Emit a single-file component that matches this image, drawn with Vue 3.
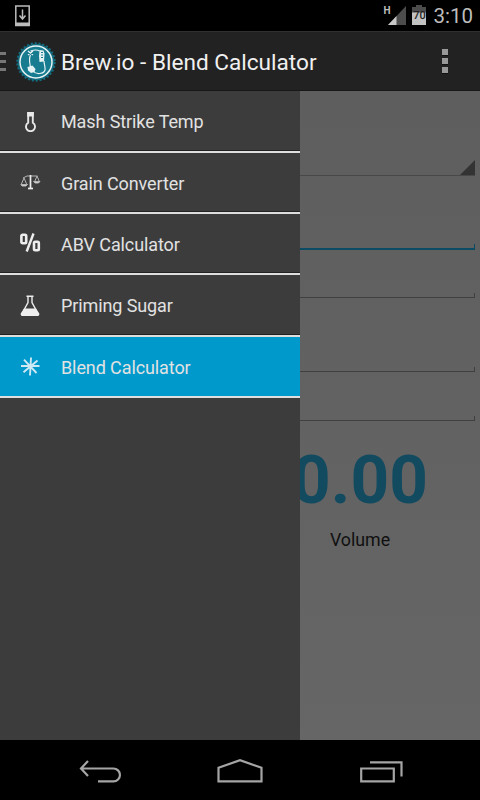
<template>
  <div class="screen">
    <header class="status-bar">
      <svg class="download" width="15" height="22" viewBox="0 0 15 22">
        <path d="M.8 1h13.4v19.5H.8z" fill="none" stroke="#bcbcbc" stroke-width="1.5" />
        <path d="M0 17.5h15V21H0z" fill="#bcbcbc" />
        <path d="M7.500 4.500v9M4.500 10.500l3 3.500 3-3.500" fill="none" stroke="#bcbcbc" stroke-width="1.500" />
      </svg>
      <div class="status-right">
        <span class="network">H</span>
        <svg class="signal" width="18" height="20" viewBox="0 0 18 20">
          <path d="M0 20L18 1v19z" fill="#4c4c4c" />
          <path d="M0 20L8.500 11v9z" fill="#c8c8c8" />
        </svg>
        <div class="battery">
          <svg width="14" height="20" viewBox="0 0 14 20">
            <path d="M4 0h6v2h4v18H0V2h4z" fill="#4c4c4c" />
            <path d="M0 7.500h14V20H0z" fill="#c2c2c2" />
          </svg>
          <span class="level">70</span>
        </div>
        <span class="clock">3:10</span>
      </div>
    </header>

    <div class="action-bar">
      <div class="drawer-toggle"><i></i><i></i><i></i></div>
      <svg class="logo" width="40" height="40" viewBox="0 0 40 40">
        <circle cx="20" cy="20" r="18.300" fill="#126b7e" />
        <circle cx="20" cy="20" r="18.700" fill="none" stroke="#126b7e" stroke-width="2" stroke-dasharray="2.100 1.816" />
        <circle cx="20" cy="20" r="16" fill="#187c90" stroke="#e9f3f4" stroke-width="1.500" />
        <g fill="none" stroke="#e4f1f3" stroke-width="1.200">
          <path d="M12 9l5 4M17 9l-5 4M14.500 9c3-1 6-2 9 0" />
          <path d="M14.500 13c-2 4-1 7 0 12M17 29c3 4 11 3 12-1 .500-3-1-6-1-9" />
        </g>
        <path d="M23.500 8l4 .500 1 3-.500 8-4.500 .500-.500-6z" fill="#e4f1f3" />
        <path d="M25 10.500h2M25 13h2M25 15.500h2" stroke="#187c90" />
        <path d="M11.500 25l5-1.500 3 3.500-1 3-3.500 1-3-2.500z" fill="#e4f1f3" />
      </svg>
      <h1>Brew.io - Blend Calculator</h1>
      <div class="overflow"><i></i><i></i><i></i></div>
    </div>

    <div class="content">
      <nav class="drawer">
        <div
          v-for="item in items"
          :key="item.name"
          class="drawer-item"
          :class="{ active: item.name === selected }"
          @click="selected = item.name"
        >
          <svg class="icon" width="22" height="22" viewBox="0 0 22 22">
            <g v-if="item.icon === 'thermometer'">
              <path d="M9.200 12.800V3h4.600v9.800a4.500 4.500 0 1 1-4.600 0z" fill="none" stroke="#e8e8e8" stroke-width="1.900" />
              <path d="M8.200 2h6.600v4.500H8.200z" fill="#e8e8e8" />
            </g>
            <g v-else-if="item.icon === 'scales'" fill="none" stroke="#b5b5b5" stroke-width="1">
              <path d="M4 7l4-2h10.500M5 7l-3 7M5 7l3 7M18 5l-2.500 6M18 5l2.500 6" />
              <path d="M2 13.500h6.500l-1.500 1.500H3zM14.500 10.500H21L19.500 12H16z" fill="#e0e0e0" />
              <path d="M11.500 4v13" stroke="#eee" stroke-width="1.700" />
              <path d="M9 17.500h5" stroke="#eee" stroke-width="1.700" />
            </g>
            <g v-else-if="item.icon === 'percent'" fill="none" stroke="#eee">
              <rect x="2.400" y="2.800" width="4.800" height="8.400" rx="1.200" stroke-width="2.600" />
              <rect x="15" y="9.800" width="4.800" height="8.400" rx="1.200" stroke-width="2.600" />
              <path d="M14.500 1.500L7.700 19.500" stroke-width="2.400" />
            </g>
            <g v-else-if="item.icon === 'flask'">
              <path d="M7.500 2.200h7M9 2.500v6l-6 11h16l-6-11V2.500" fill="none" stroke="#eee" stroke-width="1.400" />
              <path d="M5 14.500h12l3.500 5.500-1 2h-17l-1-2z" fill="#eee" />
            </g>
            <g v-else stroke="#cfe9f4" stroke-width="1.900">
              <path d="M12 2.500L11 20.500M2 11h18.500M5 4.700L17.500 18M18.500 5.500L4.500 17.300" />
            </g>
          </svg>
          <span class="name">{{ item.name }}</span>
        </div>
      </nav>

      <main class="form">
        <div class="spinner">
          <svg width="15" height="15" viewBox="0 0 15 15"><path d="M15 0v15H0z" fill="#333" /></svg>
        </div>
        <div v-for="n in 4" :key="n" class="field" :class="'field-' + n"></div>
        <div class="result">0.00</div>
        <div class="label">Volume</div>
      </main>
    </div>

    <footer class="nav-bar">
      <svg width="360" height="30" viewBox="0 0 360 30" fill="none" stroke="#a5a5a5" stroke-width="2.200">
        <path d="M28 2l-7 7.500 7 7.500M21 9.500h32.500a6.400 6.400 0 0 1 0 12.900H38" />
        <path d="M158.500 22.300V8.800L180 1.200l21.500 7.600v13.500z" />
        <path d="M301.200 9.500h32.600v12.800h-32.600zM310 3.300h31.500V17.500" />
      </svg>
    </footer>
  </div>
</template>

<script setup>
import { ref } from 'vue'

const items = [
  { name: 'Mash Strike Temp', icon: 'thermometer' },
  { name: 'Grain Converter', icon: 'scales' },
  { name: 'ABV Calculator', icon: 'percent' },
  { name: 'Priming Sugar', icon: 'flask' },
  { name: 'Blend Calculator', icon: 'blend' }
]

const selected = ref('Blend Calculator')
</script>

<style>
body {
  background: #000;
}
</style>

<style scoped>
.screen {
  display: flex;
  flex-direction: column;
  width: 480px;
  height: 800px;
  overflow: hidden;
  background: #000;
  font-family: Roboto, 'Liberation Sans', sans-serif;
}

svg {
  display: block;
}

.status-bar {
  display: flex;
  justify-content: space-between;
  height: 31px;
  padding: 0 7px 0 15px;
}

.download {
  margin-top: 5px;
}

.status-right {
  display: flex;
  color: #bebebe;
}

.network {
  margin-top: 4px;
  font-size: 10px;
  font-weight: bold;
  line-height: 14px;
}

.signal {
  margin-top: 5px;
  margin-left: -2px;
}

.battery {
  position: relative;
  margin: 5px 7px 0 6px;
}

.level {
  position: absolute;
  top: 5px;
  left: 0;
  width: 14px;
  color: #222;
  font-size: 11px;
  font-weight: 500;
  line-height: 11px;
  text-align: center;
}

.clock {
  font-size: 20.5px;
  line-height: 33px;
}

.action-bar {
  display: flex;
  align-items: center;
  box-sizing: border-box;
  height: 60px;
  background: #222;
  border-top: 1px solid #303030;
  border-bottom: 1px solid #181818;
}

.drawer-toggle {
  display: flex;
  flex-direction: column;
  gap: 5px;
  width: 6px;
  margin: 1px 10px 0 0;
}

.drawer-toggle i {
  height: 3px;
  background: #777;
}

.logo {
  margin: 1px 5px 0 0;
}

h1 {
  flex: 1;
  margin: 3px 0 0;
  color: #f0f0f0;
  font-size: 22.6px;
  font-weight: normal;
  line-height: 30px;
  white-space: nowrap;
}

.overflow {
  display: flex;
  flex-direction: column;
  gap: 3px;
  margin-right: 32px;
}

.overflow i {
  width: 6px;
  height: 6px;
  background: #999;
  box-shadow: 0 1px 0 #111;
}

.content {
  display: flex;
  height: 649px;
}

.drawer {
  display: grid;
  grid-template-rows: 62px 61px 61px 62px 61px;
  width: 300px;
  background: #3c3c3c;
}

.drawer-item {
  display: flex;
  align-items: center;
  box-sizing: border-box;
  padding-left: 19px;
  border-bottom: 2px solid #dedede;
  box-shadow: inset 0 -1px 0 #222;
  color: #e2e2e2;
  font-size: 18px;
  letter-spacing: -0.1px;
  cursor: pointer;
}

.drawer-item.active {
  background: #0099cc;
  box-shadow: none;
}

.icon {
  margin: 0 20px 1px 0;
}

.name {
  margin-top: 1px;
}

.form {
  display: flex;
  flex-direction: column;
  width: 180px;
  background: linear-gradient(#5e5e5e, #666);
}

.spinner {
  display: flex;
  align-items: flex-end;
  justify-content: flex-end;
  box-sizing: border-box;
  height: 85px;
  margin-right: 5px;
  border-bottom: 1px solid #484848;
}

.field {
  display: flex;
  align-items: flex-end;
  justify-content: flex-end;
  box-sizing: border-box;
  margin-right: 5px;
  border-bottom: 1px solid #404040;
}

.field::after {
  width: 1px;
  height: 4px;
  background: #404040;
  content: '';
}

.field-1 {
  height: 74px;
  border-bottom: 2px solid #0c4b64;
}

.field-1::after {
  background: #0c4b64;
}

.field-2 {
  height: 48px;
}

.field-3 {
  height: 74px;
}

.field-4 {
  height: 49px;
}

.result {
  height: 80px;
  margin-top: 19px;
  margin-left: -60px;
  clip-path: inset(0 0 0 60px);
  color: #124a60;
  font-size: 67.5px;
  font-weight: bold;
  line-height: 80px;
  text-align: center;
}

.label {
  margin-top: 8px;
  margin-left: -60px;
  color: #101010;
  font-size: 17.8px;
  line-height: 24px;
  text-align: center;
}

.nav-bar {
  display: flex;
  justify-content: center;
  padding-top: 19px;
}
</style>
